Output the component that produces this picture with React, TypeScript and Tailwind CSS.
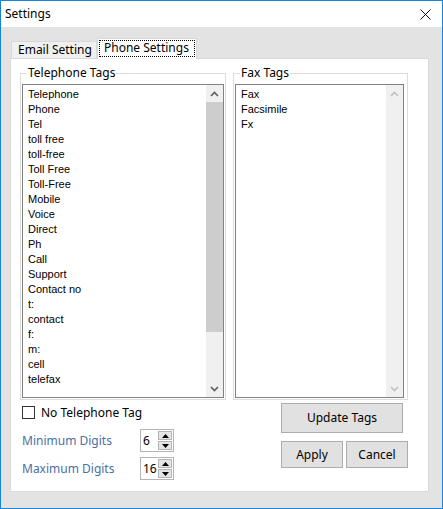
import React from 'react';

const seg = "font-['Noto_Sans',sans-serif]";
const ms = "font-['Liberation_Sans',Arial,sans-serif]";

const telephoneTags = [
    'Telephone', 'Phone', 'Tel', 'toll free', 'toll-free', 'Toll Free', 'Toll-Free', 'Mobile', 'Voice', 'Direct',
    'Ph', 'Call', 'Support', 'Contact no', 't:', 'contact', 'f:', 'm:', 'cell', 'telefax',
];
const faxTags = ['Fax', 'Facsimile', 'Fx'];

const Chevron: React.FC<{ up?: boolean; color: string }> = ({ up, color }) => (
    <svg width="9" height="6" viewBox="0 0 9 6">
        <path d={up ? 'M1 5 L4.5 1.5 L8 5' : 'M1 1 L4.5 4.5 L8 1'} fill="none" stroke={color} strokeWidth="1.7" />
    </svg>
);

const ScrollBar: React.FC<{ disabled?: boolean }> = ({ disabled }) => {
    const color = disabled ? '#c0c0c0' : '#606060';
    return (
        <div className="w-[17px] h-full bg-[#f0f0f0] flex flex-col shrink-0">
            <div className="h-[17px] flex items-center justify-center"><Chevron up color={color} /></div>
            <div className="flex-1 flex flex-col">
                {!disabled && <div className="h-[230px] bg-[#cdcdcd]" />}
            </div>
            <div className="h-[17px] flex items-center justify-center"><Chevron color={color} /></div>
        </div>
    );
};

const GroupBox: React.FC<{ title: string; items: string[]; width: string; pr: string; disabled?: boolean }> = ({ title, items, width, pr, disabled }) => (
    <fieldset className={`${width} border border-[#dcdcdc] pl-[1px] ${pr} pb-[1px]`}>
        <legend className={`${seg} ml-[5px] px-[1px] text-[12px] leading-[16px] text-black`}>{title}</legend>
        <div className="mt-[3px] h-[314px] border border-[#828282] bg-white flex">
            <div className={`${ms} flex-1 pl-[5px] pt-[2px] text-[11px] leading-[15px] text-black`}>
                {items.map(t => <div key={t}>{t}</div>)}
            </div>
            <ScrollBar disabled={disabled} />
        </div>
    </fieldset>
);

const Spinner: React.FC<{ value: string }> = ({ value }) => (
    <div className="w-[34px] h-[23px] border border-[#b4b4b4] bg-white flex">
        <div className={`${seg} flex-1 pl-[2px] text-[12px] leading-[21px] text-black`}>{value}</div>
        <div className="w-[15px] flex flex-col gap-[1px] py-[1px] pr-[1px]">
            {[true, false].map(up => (
                <div key={String(up)} className="flex-1 bg-[#e5e5e5] border border-[#b4b4b4] flex items-center justify-center">
                    <svg width="7" height="4" viewBox="0 0 7 4">
                        <path d={up ? 'M0 4 L3.5 0 L7 4 Z' : 'M0 0 L3.5 4 L7 0 Z'} fill="#000" />
                    </svg>
                </div>
            ))}
        </div>
    </div>
);

const Button: React.FC<{ label: string; className: string }> = ({ label, className }) => (
    <button className={`${seg} ${className} bg-[#e1e1e1] border border-[#adadad] text-[12px] text-black flex items-center justify-center`}>
        {label}
    </button>
);

const App: React.FC = () => {
    return (
        <div className="w-[443px] h-[509px] border border-[#1883d7] bg-[#e3e3e3] flex flex-col">
            <div className="h-[26px] bg-white flex items-center justify-between pl-[4px] pr-[11px] shrink-0">
                <span className={`${seg} text-[12px] text-black`}>Settings</span>
                <svg width="11" height="11" viewBox="0 0 11 11">
                    <path d="M0.5 0.5 L10.5 10.5 M10.5 0.5 L0.5 10.5" stroke="#111" strokeWidth="1" />
                </svg>
            </div>

            <div className="pl-[9px] pt-[11px] flex flex-col">
                <div className="h-[20px] flex items-end pl-[1px]">
                    <div className={`${seg} h-[17px] w-[86px] bg-[#f0f0f0] border border-b-0 border-[#d9d9d9] text-[12px] leading-[16px] text-black pl-[6px]`}>
                        Email Setting
                    </div>
                    <div className="relative z-10 -mb-[1px] h-[21px] w-[100px] bg-white border border-b-0 border-[#d9d9d9] pl-[1px] pt-[1px]">
                        <div className={`${seg} h-[17px] w-[96px] border border-dotted border-black text-[12px] leading-[14px] text-black pl-[4px]`}>
                            Phone Settings
                        </div>
                    </div>
                </div>

                <div className="w-[419px] h-[434px] bg-white border border-[#d9d9d9] pl-[9px] pr-[20px] pt-[6px] flex flex-col">
                    <div className="flex gap-[7px]">
                        <GroupBox title="Telephone Tags" items={telephoneTags} width="w-[206px]" pr="pr-[1px]" />
                        <GroupBox title="Fax Tags" items={faxTags} width="w-[175px]" pr="pr-[3px]" disabled />
                    </div>

                    <div className="flex justify-between">
                        <div className="ml-[2px] mt-[6px] flex flex-col">
                            <div className="h-[13px] flex items-center gap-[6px]">
                                <div className="w-[13px] h-[13px] border border-[#333] bg-white" />
                                <span className={`${seg} text-[12px] text-black`}>No Telephone Tag</span>
                            </div>
                            <div className="mt-[10px] flex items-center">
                                <span className={`${seg} w-[118px] text-[12px] text-[#4a6fa5]`}>Minimum Digits</span>
                                <Spinner value="6" />
                            </div>
                            <div className="mt-[5px] flex items-center">
                                <span className={`${seg} w-[118px] text-[12px] text-[#4a6fa5]`}>Maximum Digits</span>
                                <Spinner value="16" />
                            </div>
                        </div>

                        <div className="w-[127px] mt-[3px] flex flex-col">
                            <Button label="Update Tags" className="w-[122px] h-[30px]" />
                            <div className="mt-[8px] flex gap-[3px]">
                                <Button label="Apply" className="w-[62px] h-[27px]" />
                                <Button label="Cancel" className="w-[62px] h-[27px]" />
                            </div>
                        </div>
                    </div>
                </div>
            </div>
        </div>
    );
};

export default App;
